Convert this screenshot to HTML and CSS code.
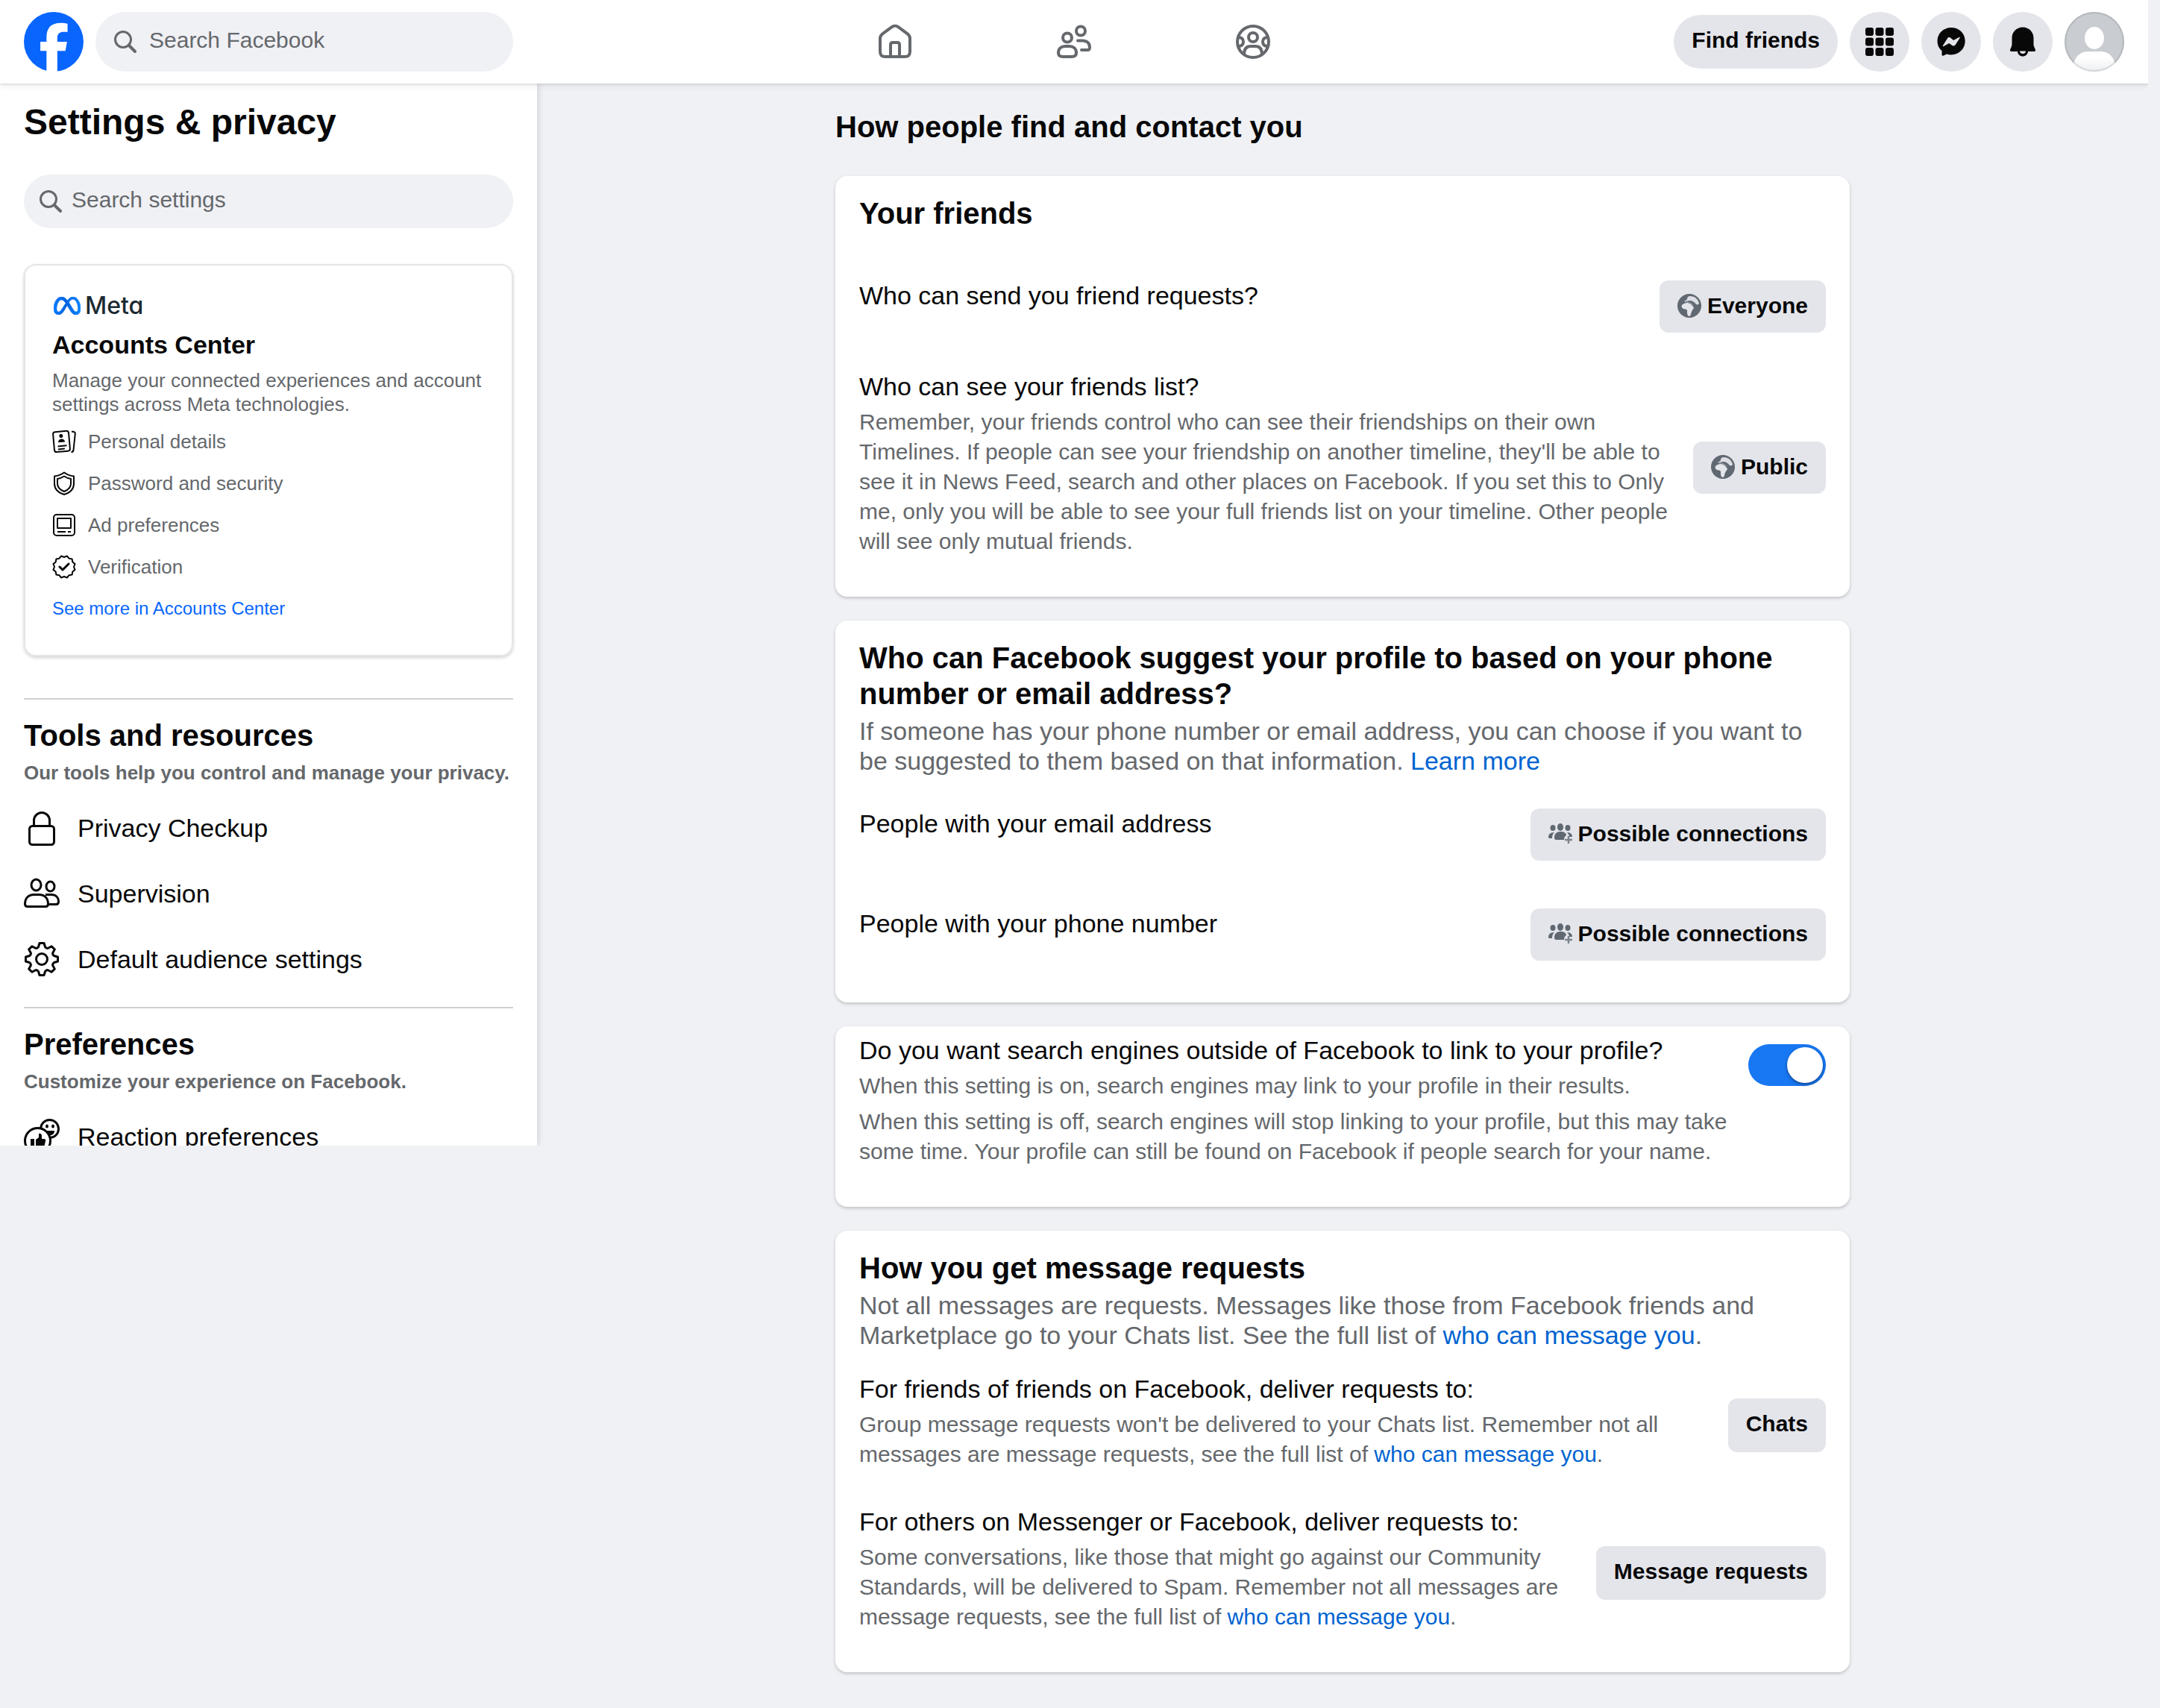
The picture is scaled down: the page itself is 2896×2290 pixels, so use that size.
FILE: index.html
```html
<!DOCTYPE html>
<html lang="en">
<head>
<meta charset="utf-8">
<meta name="viewport" content="width=device-width, initial-scale=1">
<title>Settings &amp; privacy | Facebook</title>
<link rel="stylesheet" href="styles.css">
</head>
<body>
<svg class="sprite" aria-hidden="true">
  <symbol id="i-search" viewBox="0 0 32 32">
    <circle cx="13" cy="13" r="10.500" fill="none" stroke="currentColor" stroke-width="3"/>
    <path d="M21 21l8 8" fill="none" stroke="currentColor" stroke-width="4" stroke-linecap="round"/>
  </symbol>
  <symbol id="i-globe" viewBox="0 0 32 32">
    <circle cx="16" cy="16" r="16" fill="#606872"/>
    <path d="M8 10c2-1 4-1 5-3 0-2 1-4 4-4 6 0 11 4 12 10-1 1-2 2-4 1-2-3-5-5-9-5-3 1-5 1-8 1z" fill="#dcdee3"/>
    <path d="M6 15c3-3 8-4 11-2 2 1 3 4 5 5 0 2-2 3-3 6-1 2-1 6-3 6-3 0-3-4-3-8-1-2-3-1-5-2-2-1-3-3-2-5z" fill="#e4e5ea"/>
    <path d="M10 11c4 0 9 1 11 5" fill="none" stroke="#8a9098" stroke-width="1.500"/>
  </symbol>
  <symbol id="i-connections" viewBox="0 0 32 32">
    <g fill="#606872">
      <ellipse cx="16" cy="7" rx="4" ry="5"/>
      <ellipse cx="6" cy="8" rx="3.500" ry="4"/>
      <ellipse cx="26" cy="8" rx="3.500" ry="4"/>
      <path d="M8 21c0-5 3-8 8-8s8 2 8 5c-2 1-3 3-3 6H10c-1 0-2-1-2-3zM0 21c0-4 2-7 8-7-2 2-3 4-3 8H1zM25 14c4 0 7 2 7 6h-4c0-2-1-4-3-6z"/>
    </g>
    <path d="M27 19v10M22 24h10" stroke="#7c838c" stroke-width="2.500"/>
  </symbol>
</svg>

<header class="topbar">
  <div class="topbar-start">
    <a class="logo" href="#" aria-label="Facebook">
      <svg viewBox="0 0 36 36"><circle cx="18" cy="18" r="18" fill="#0866ff"/><path fill="#fff" d="M13.651 35.471v-11.97H9.936V18h3.715v-2.37c0-6.127 2.772-8.964 8.784-8.964 1.138 0 3.103.223 3.91.446v4.983c-.425-.043-1.167-.065-2.081-.065-2.952 0-4.09 1.116-4.09 4.025V18h5.883l-1.008 5.5h-4.867V36h-6.53z"/></svg>
    </a>
    <label class="search search-global">
      <svg class="search-icon"><use href="#i-search"/></svg>
      <input type="search" placeholder="Search Facebook" aria-label="Search Facebook">
    </label>
  </div>
  <nav class="tabs" aria-label="Facebook">
    <a class="tab" href="#" aria-label="Home">
      <svg viewBox="0 0 48 48"><path d="M4 19.500c0-2.500.8-4 2.600-5.600L19 4.600c3-2.500 7-2.500 10 0l12.400 9.300C43.200 15.500 44 17 44 19.500V37c0 5-2 7-7 7H11c-5 0-7-2-7-7z"/><path d="M18 44V28c0-2 1-3 3-3h6c2 0 3 1 3 3v16"/></svg>
    </a>
    <a class="tab" href="#" aria-label="Friends">
      <svg viewBox="0 0 48 48"><circle cx="15" cy="18.500" r="6"/><circle cx="33" cy="9.500" r="6"/><path d="M9 44h12c4 0 6-2 6-5 0-6-4-9-9-9h-6c-5 0-9 3-9 9 0 3 2 5 6 5zM29 22.500h6c6 0 10 3 10 9 0 2-1 3.500-3 3.500h-8" stroke-linecap="round"/></svg>
    </a>
    <a class="tab" href="#" aria-label="Groups">
      <svg viewBox="0 0 48 48"><circle cx="24" cy="24" r="21"/><circle cx="24" cy="18" r="6"/><path d="M12 41c0-7 3-11 9-11h6c6 0 9 4 9 11M4 18.500c4-1 7 1.500 7 5.500s-3 6.500-7 5.500M44 18.500c-4-1-7 1.500-7 5.500s3 6.500 7 5.500"/></svg>
    </a>
  </nav>
  <div class="topbar-end">
    <button class="find-friends" type="button">Find friends</button>
    <button class="round" type="button" aria-label="Menu">
      <svg viewBox="0 0 40 40"><g fill="#080809"><rect x="1" y="1" width="11" height="11" rx="3"/><rect x="14.500" y="1" width="11" height="11" rx="3"/><rect x="28" y="1" width="11" height="11" rx="3"/><rect x="1" y="14.500" width="11" height="11" rx="3"/><rect x="14.500" y="14.500" width="11" height="11" rx="3"/><rect x="28" y="14.500" width="11" height="11" rx="3"/><rect x="1" y="28" width="11" height="11" rx="3"/><rect x="14.500" y="28" width="11" height="11" rx="3"/><rect x="28" y="28" width="11" height="11" rx="3"/></g></svg>
    </button>
    <button class="round" type="button" aria-label="Messenger">
      <svg viewBox="0 0 40 40"><path fill="#080809" d="M20 1C9.500 1 1.500 8.800 1.500 19c0 5.500 2.200 10 6 13.200V37c0 1.600 1 2.200 2.400 1.600l4.200-2c2 .6 3.800.8 5.900.8 10.500 0 18.700-8 18.700-18.400S30.500 1 20 1z"/><path fill="#e4e5ea" d="M9 25l6-9.500c1-1.500 2.800-1.800 4.200-.8l4 3.200 7.300-4c1-.4 1.600.3 1 1.200l-5.700 9c-1 1.500-2.800 1.900-4.300.8L17.200 22 10 26c-.9.500-1.600 0-1-1z"/></svg>
    </button>
    <button class="round" type="button" aria-label="Notifications">
      <svg viewBox="0 0 40 40"><path fill="#080809" fill-rule="evenodd" d="M20 .5C11.500.500 5.500 7 5.500 15v8c0 2.500-.8 4-2 6.500-1 2.500-.5 3.500 1.500 3.500h8c.3 4 3.300 6.500 7 6.500s6.700-2.500 7-6.500h8c2 0 2.500-1 1.500-3.500-1.200-2.500-2-4-2-6.500v-8C34.500 7 28.500.500 20 .500zM16 32.500h8c0 2-1.500 3.500-4 3.500s-4-1.500-4-3.500z"/></svg>
    </button>
    <button class="round avatar" type="button" aria-label="Your profile">
      <svg viewBox="0 0 80 80">
        <defs><clipPath id="avatar-clip"><circle cx="40" cy="40" r="40"/></clipPath><linearGradient id="avatar-body" x1="0" y1="0" x2="0" y2="1"><stop offset=".3" stop-color="#fff"/><stop offset="1" stop-color="#eceef1"/></linearGradient></defs>
        <g clip-path="url(#avatar-clip)"><rect width="80" height="80" fill="#c9ccd1"/><ellipse cx="40" cy="35" rx="13" ry="15" fill="#fff"/><path d="M11 80c0-17 8-27 21-27h16c13 0 21 10 21 27z" fill="url(#avatar-body)"/></g>
        <circle cx="40" cy="40" r="39" fill="none" stroke="#000" stroke-opacity=".1" stroke-width="2"/>
      </svg>
    </button>
  </div>
</header>

<div class="layout">
  <aside class="sidebar">
    <h1>Settings &amp; privacy</h1>
    <label class="search search-settings">
      <svg class="search-icon"><use href="#i-search"/></svg>
      <input type="search" placeholder="Search settings" aria-label="Search settings">
    </label>

    <section class="accounts">
      <div class="meta-logo">
        <svg viewBox="0 4 24 16"><defs><linearGradient id="meta-fill"><stop offset="0" stop-color="#0a7cff"/><stop offset=".45" stop-color="#0062e0"/><stop offset="1" stop-color="#0a84ff"/></linearGradient></defs><path fill="url(#meta-fill)" stroke="url(#meta-fill)" stroke-width=".5" d="M6.915 4.030c-1.968 0-3.683 1.280-4.871 3.113C.704 9.208 0 11.883 0 14.449c0 .706.07 1.369.21 1.973a6.624 6.624 0 0 0 .265.86 5.297 5.297 0 0 0 .371.761c.696 1.159 1.818 1.927 3.593 1.927 1.497 0 2.633-.671 3.965-2.444.76-1.012 1.144-1.626 2.663-4.320l.756-1.339.186-.325c.061.1.121.196.183.3l2.152 3.595c.724 1.210 1.665 2.556 2.470 3.314 1.046.987 1.992 1.220 3.060 1.220 1.075 0 1.876-.355 2.455-.843a3.743 3.743 0 0 0 .81-.973c.542-.939.861-2.127.861-3.745 0-2.720-.681-5.357-2.084-7.450-1.282-1.912-2.957-2.930-4.716-2.930-1.047 0-2.088.467-3.053 1.308-.652.57-1.257 1.290-1.820 2.050-.69-.875-1.335-1.547-1.958-2.056-1.182-.966-2.315-1.303-3.454-1.303zm10.160 2.053c1.147 0 2.188.758 2.992 1.999 1.132 1.748 1.647 4.195 1.647 6.400 0 1.548-.368 2.900-1.839 2.900-.58 0-1.027-.23-1.664-1.004-.496-.601-1.343-1.878-2.832-4.358l-.617-1.028a44.908 44.908 0 0 0-1.255-1.980c.07-.109.141-.224.211-.327 1.120-1.667 2.118-2.602 3.358-2.602zm-10.201.553c1.265 0 2.058.791 2.675 1.446.307.327.737.871 1.234 1.579l-1.020 1.566c-.757 1.163-1.882 3.017-2.837 4.338-1.191 1.649-1.810 1.817-2.486 1.817-.524 0-1.038-.237-1.383-.794-.263-.426-.464-1.130-.464-2.046 0-2.221.63-4.535 1.660-6.088.454-.687.964-1.226 1.533-1.533a2.264 2.264 0 0 1 1.088-.285z"/></svg>
        <span>Meta</span>
      </div>
      <h2>Accounts Center</h2>
      <p>Manage your connected experiences and account settings across Meta technologies.</p>
      <ul>
        <li><svg viewBox="0 0 32 32"><g transform="rotate(-5 12 16)"><rect x="2" y="2.500" width="21" height="27" rx="3"/><circle cx="12.500" cy="8.500" r="2.500" class="solid"/><path class="solid" d="M8 17c0-3 2-4.500 4.500-4.500S17 14 17 17z"/><path d="M7 22h12M7 26h9"/></g><path d="M26 2.500l3 .5c1.500.3 2 1 1.800 2.500l-2.300 22c-.2 1.500-1.500 2.500-3 2.500"/></svg>Personal details</li>
        <li><svg viewBox="0 0 32 32"><path d="M16 1.500c4 3 8 4.500 13 5v10c0 7-5 12-13 14.500C8 28.500 3 23.500 3 16.500v-10c5-.5 9-2 13-5z"/><path d="M16 6.500c3 2 6 3 9 3.500v6.500c0 5-3 8-9 10.500-6-2.500-9-5.500-9-10.500V10c3-.5 6-1.500 9-3.500z"/></svg>Password and security</li>
        <li><svg viewBox="0 0 32 32"><rect x="2" y="2" width="28" height="28" rx="4"/><rect x="7" y="7" width="18" height="13"/><path d="M7 25h11M21 25h4"/></svg>Ad preferences</li>
        <li><svg viewBox="-16 -16 32 32"><path d="M0-13L3.900-14.500L6.500-11.300L10.600-10.600L11.300-6.500L14.500-3.900L13 0L14.500 3.900L11.300 6.500L10.600 10.600L6.500 11.300L3.900 14.500L0 13L-3.900 14.500L-6.500 11.300L-10.600 10.600L-11.300 6.500L-14.500 3.900L-13 0L-14.500-3.900L-11.300-6.500L-10.600-10.600L-6.500-11.300L-3.900-14.500Z"/><path class="heavy" d="M-6 0l4 4 8-8"/></svg>Verification</li>
      </ul>
      <a href="#">See more in Accounts Center</a>
    </section>

    <section class="group">
      <h2>Tools and resources</h2>
      <p>Our tools help you control and manage your privacy.</p>
      <nav>
        <a href="#"><svg viewBox="0 0 48 48"><rect x="7.500" y="21.500" width="33" height="25" rx="4"/><path d="M13.500 21.500V14a10.500 10.500 0 0 1 21 0v7.500"/></svg>Privacy Checkup</a>
        <a href="#"><svg viewBox="0 0 48 48"><ellipse cx="16.500" cy="12.500" rx="6.500" ry="7.500"/><ellipse cx="35.500" cy="14.500" rx="5.500" ry="6.500"/><path d="M5 41.500h24c2.500 0 3.500-1.500 3.500-3.500 0-8-5-12.500-12-12.500h-7c-7 0-12 4.500-12 12.500 0 2 1 3.500 3.500 3.500zM29 25.500h8c6 0 9.500 4 9.500 9.500 0 2.500-1 3.500-3.500 3.500h-10"/></svg>Supervision</a>
        <a href="#"><svg viewBox="-24 -24 48 48"><circle r="7.500"/><path d="M-4.500-16.500L-3-21.500L3-21.500L4.500-16.500Q6.200-14 8.500-14.800L13.100-17.300L17.300-13.100L14.800-8.500Q14-6.200 16.500-4.500L21.500-3L21.500 3L16.500 4.500Q14 6.200 14.800 8.500L17.300 13.100L13.100 17.300L8.500 14.800Q6.200 14 4.500 16.500L3 21.500L-3 21.500L-4.500 16.500Q-6.200 14-8.500 14.800L-13.100 17.300L-17.300 13.100L-14.800 8.500Q-14 6.200-16.500 4.500L-21.500 3L-21.500-3L-16.500-4.500Q-14-6.200-14.800-8.500L-17.300-13.100L-13.100-17.300L-8.500-14.800Q-6.200-14-4.500-16.500Z"/></svg>Default audience settings</a>
      </nav>
    </section>

    <section class="group">
      <h2>Preferences</h2>
      <p>Customize your experience on Facebook.</p>
      <nav>
        <a href="#"><svg viewBox="0 0 48 48"><circle cx="34.500" cy="13.500" r="12"/><ellipse class="solid" cx="31" cy="10" rx="2" ry="2.500"/><ellipse class="solid" cx="39" cy="10" rx="2" ry="2.500"/><path class="solid" d="M28 16h13c0 4-2.500 6-6 6s-7-2-7-6z"/><circle cx="18.500" cy="29.500" r="17" fill="#fff"/><path class="solid" d="M9 27h5v13H9zM16 28l4-3v-5c2-1 4 0 4 3v4h3c2 0 2.500 1.500 2 3l-2 8c-.4 1.500-1 2-3 2h-8z"/></svg>Reaction preferences</a>
      </nav>
    </section>
  </aside>

  <main class="content">
    <div class="column">
      <h1>How people find and contact you</h1>

      <section class="card">
        <header class="card-head card-head-bare"><h2>Your friends</h2></header>
        <div class="rows">
          <div class="row row-compact">
            <div class="row-text"><h3>Who can send you friend requests?</h3></div>
            <button class="choice" type="button"><svg><use href="#i-globe"/></svg>Everyone</button>
          </div>
          <div class="row">
            <div class="row-text">
              <h3>Who can see your friends list?</h3>
              <p>Remember, your friends control who can see their friendships on their own Timelines. If people can see your friendship on another timeline, they'll be able to see it in News Feed, search and other places on Facebook. If you set this to Only me, only you will be able to see your full friends list on your timeline. Other people will see only mutual friends.</p>
            </div>
            <button class="choice" type="button"><svg><use href="#i-globe"/></svg>Public</button>
          </div>
        </div>
      </section>

      <section class="card">
        <header class="card-head">
          <h2>Who can Facebook suggest your profile to based on your phone number or email address?</h2>
          <p>If someone has your phone number or email address, you can choose if you want to be suggested to them based on that information. <a href="#">Learn more</a></p>
        </header>
        <div class="rows">
          <div class="row row-compact">
            <div class="row-text"><h3>People with your email address</h3></div>
            <button class="choice" type="button"><svg><use href="#i-connections"/></svg>Possible connections</button>
          </div>
          <div class="row row-compact">
            <div class="row-text"><h3>People with your phone number</h3></div>
            <button class="choice" type="button"><svg><use href="#i-connections"/></svg>Possible connections</button>
          </div>
        </div>
      </section>

      <section class="card card-switch">
        <div class="row">
          <div class="row-text">
            <h3><label for="engines">Do you want search engines outside of Facebook to link to your profile?</label></h3>
            <p>When this setting is on, search engines may link to your profile in their results.</p>
            <p>When this setting is off, search engines will stop linking to your profile, but this may take some time. Your profile can still be found on Facebook if people search for your name.</p>
          </div>
          <input class="switch" id="engines" type="checkbox" role="switch" checked>
        </div>
      </section>

      <section class="card">
        <header class="card-head">
          <h2>How you get message requests</h2>
          <p>Not all messages are requests. Messages like those from Facebook friends and Marketplace go to your Chats list. See the full list of <a href="#">who can message you</a>.</p>
        </header>
        <div class="rows">
          <div class="row">
            <div class="row-text">
              <h3>For friends of friends on Facebook, deliver requests to:</h3>
              <p>Group message requests won't be delivered to your Chats list. Remember not all messages are message requests, see the full list of <a href="#">who can message you</a>.</p>
            </div>
            <button class="choice choice-plain" type="button">Chats</button>
          </div>
          <div class="row">
            <div class="row-text">
              <h3>For others on Messenger or Facebook, deliver requests to:</h3>
              <p>Some conversations, like those that might go against our Community Standards, will be delivered to Spam. Remember not all messages are message requests, see the full list of <a href="#">who can message you</a>.</p>
            </div>
            <button class="choice choice-plain" type="button">Message requests</button>
          </div>
        </div>
      </section>
    </div>
  </main>
</div>
</body>
</html>
```

FILE: styles.css
```css
:root {
  --text: #080809;
  --muted: #65686c;
  --page: #f0f1f5;
  --control: #e4e5ea;
  --line: #ced0d4;
  --link: #0064d1;
  --surface: #fff;
}

* {
  box-sizing: border-box;
}

body,
h1,
h2,
h3,
p,
ul {
  margin: 0;
}

body {
  padding-right: 16px;
  background: var(--page);
  color: var(--text);
  font-family: "Liberation Sans", Arial, sans-serif;
  font-size: 30px;
  line-height: 40px;
}

a {
  color: var(--link);
  text-decoration: none;
}

button {
  border: 0;
  padding: 0;
  background: var(--control);
  color: var(--text);
  font: inherit;
  font-weight: 700;
  cursor: pointer;
}

.sprite {
  display: none;
}

/* Top bar */

.topbar {
  position: relative;
  z-index: 2;
  display: grid;
  grid-template-columns: 1fr auto 1fr;
  align-items: center;
  height: 112px;
  padding: 0 32px;
  background: var(--surface);
  box-shadow: 0 2px 2px rgba(0, 0, 0, 0.08), 0 4px 8px rgba(0, 0, 0, 0.06);
  clip-path: inset(0 0 -16px 0);
}

.topbar-start,
.topbar-end {
  display: flex;
  align-items: center;
  gap: 16px;
}

.topbar-end {
  justify-content: flex-end;
}

.logo,
.logo svg {
  display: block;
  width: 80px;
  height: 80px;
}

.search {
  display: flex;
  align-items: center;
  border-radius: 40px;
  background: var(--page);
  color: var(--muted);
}

.search-icon {
  flex: none;
  width: 32px;
  height: 32px;
}

.search input {
  flex: 1;
  min-width: 0;
  border: 0;
  padding: 0 0 4px;
  outline: 0;
  background: none;
  color: var(--text);
  font: inherit;
}

.search input::placeholder {
  color: var(--muted);
  opacity: 1;
}

.search-global {
  width: 560px;
  height: 80px;
  padding: 0 24px;
  gap: 16px;
}

.tabs {
  display: flex;
}

.tab {
  display: flex;
  justify-content: center;
  width: 240px;
  color: var(--muted);
}

.tab svg {
  width: 48px;
  height: 48px;
  fill: none;
  stroke: currentColor;
  stroke-width: 4;
}

.find-friends {
  height: 72px;
  padding: 0 24px 4px;
  border-radius: 36px;
}

.round {
  display: grid;
  place-items: center;
  width: 80px;
  height: 80px;
  border-radius: 50%;
}

.round svg {
  width: 40px;
  height: 40px;
}

.avatar svg {
  width: 80px;
  height: 80px;
}

/* Sidebar */

.layout {
  display: flex;
  align-items: flex-start;
}

.sidebar {
  flex: none;
  width: 720px;
  max-height: 1424px;
  overflow: hidden;
  padding: 24px 32px 0;
  background: var(--surface);
  box-shadow: 2px 0 8px rgba(0, 0, 0, 0.12);
  clip-path: inset(0 -16px 0 0);
}

.sidebar h1 {
  font-size: 48px;
  line-height: 56px;
}

.search-settings {
  height: 72px;
  margin: 42px 0 48px;
  padding: 0 20px;
  gap: 12px;
}

.accounts {
  padding: 38px 36px 46px;
  border: 2px solid #e4e5e7;
  border-radius: 16px;
  box-shadow: 0 2px 4px rgba(0, 0, 0, 0.18);
  color: var(--muted);
  font-size: 26px;
  line-height: 32px;
}

.meta-logo {
  display: flex;
  align-items: center;
  gap: 6px;
  height: 32px;
  padding-left: 2px;
  color: #1c2b33;
  font-family: Inter, sans-serif;
  font-size: 32px;
  font-weight: 500;
  font-feature-settings: "cv11";
}

.meta-logo svg {
  width: 36px;
  height: 24px;
}

.accounts h2 {
  margin: 16px 0 12px;
  color: var(--text);
  font-size: 34px;
  line-height: 40px;
}

.accounts ul {
  margin: 6px 0 12px;
  padding: 0;
  list-style: none;
}

.accounts li {
  display: flex;
  align-items: center;
  gap: 16px;
  height: 56px;
}

.accounts li svg {
  width: 32px;
  height: 32px;
  stroke-width: 2;
}

.accounts li svg,
.group svg {
  fill: none;
  stroke: var(--text);
  stroke-linejoin: round;
}

.accounts .solid,
.group .solid {
  fill: var(--text);
  stroke: none;
}

.accounts .heavy {
  stroke-width: 3;
  stroke-linecap: round;
}

.accounts > a {
  display: block;
  color: #0866ff;
  font-size: 24px;
}

.accounts + .group {
  margin-top: 56px;
}

.group {
  margin-top: 20px;
  padding-top: 24px;
  border-top: 2px solid var(--line);
}

.group h2 {
  font-size: 40px;
  line-height: 48px;
}

.group p {
  margin: 10px 0 14px;
  color: var(--muted);
  font-size: 26px;
  font-weight: 700;
  line-height: 32px;
}

.group nav a {
  display: flex;
  align-items: center;
  gap: 24px;
  height: 88px;
  color: var(--text);
  font-size: 34px;
}

.group svg {
  width: 48px;
  height: 48px;
  stroke-width: 3;
}

/* Settings cards */

.content {
  flex: 1;
  padding: 34px 32px 48px;
}

.column {
  max-width: 1360px;
  margin: 0 auto;
}

.column > h1 {
  margin-bottom: 42px;
  font-size: 40px;
  line-height: 48px;
}

.card {
  margin-bottom: 32px;
  padding: 26px 32px 44px;
  border-radius: 16px;
  background: var(--surface);
  box-shadow: 0 2px 4px rgba(0, 0, 0, 0.2);
}

.card-switch {
  padding-top: 12px;
}

.card-head {
  margin-bottom: 32px;
}

.card-head-bare {
  margin-bottom: 54px;
}

.card-head h2 {
  font-size: 40px;
  line-height: 48px;
}

.card-head p {
  margin-top: 6px;
  color: var(--muted);
  font-size: 34px;
}

.rows {
  display: flex;
  flex-direction: column;
  gap: 40px;
}

.row {
  display: flex;
  gap: 24px;
}

.row-compact {
  padding: 12px 0;
}

.row-text {
  flex: 1;
  padding-bottom: 10px;
}

.row-text h3 {
  font-size: 34px;
  font-weight: 400;
}

.row-text p {
  margin-top: 8px;
  color: var(--muted);
}

.choice {
  display: flex;
  flex: none;
  align-items: center;
  align-self: center;
  gap: 8px;
  height: 70px;
  padding: 0 24px 2px;
  border-radius: 12px;
}

.choice-plain {
  height: 72px;
  padding-bottom: 4px;
}

.choice svg {
  width: 32px;
  height: 32px;
}

.switch {
  position: relative;
  flex: none;
  width: 104px;
  height: 56px;
  margin: 12px 0 0;
  border-radius: 28px;
  appearance: none;
  background: #bcc0c4;
  cursor: pointer;
}

.switch::before {
  content: "";
  position: absolute;
  top: 4px;
  left: 4px;
  width: 48px;
  height: 48px;
  border-radius: 50%;
  background: var(--surface);
  box-shadow: 0 2px 4px rgba(0, 0, 0, 0.4);
}

.switch:checked {
  background: #1877f2;
}

.switch:checked::before {
  left: 52px;
}
```
